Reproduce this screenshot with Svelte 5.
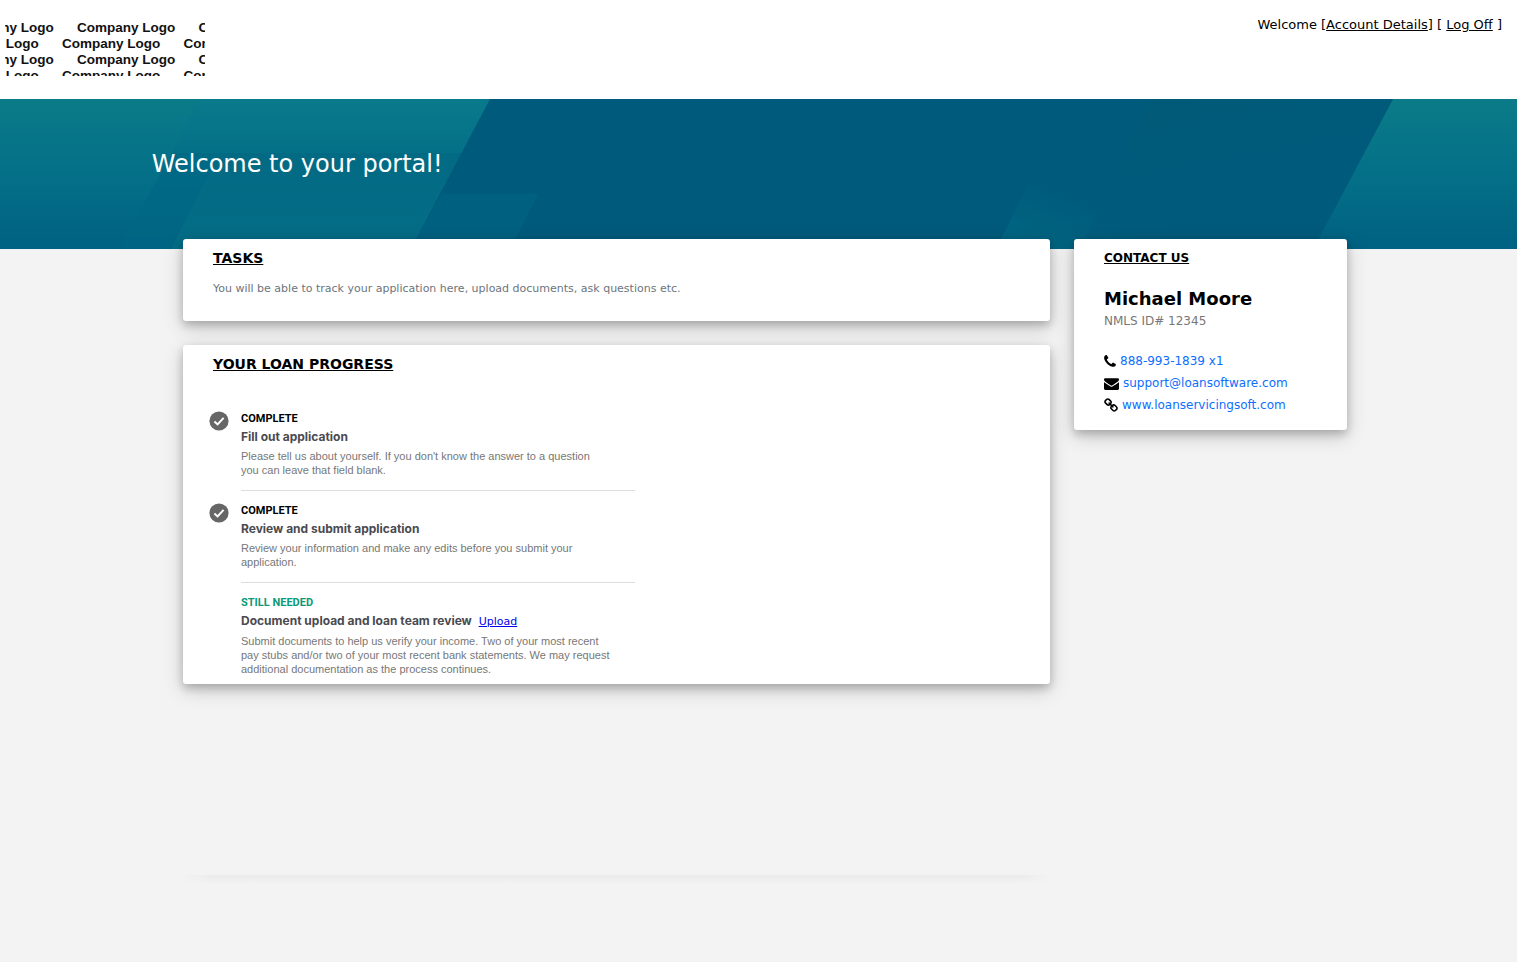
<script lang="ts">
	interface Step {
		status: string;
		done: boolean;
		title: string;
		text: string;
		action?: string;
	}

	const steps: Step[] = [
		{
			status: 'COMPLETE',
			done: true,
			title: 'Fill out application',
			text: "Please tell us about yourself. If you don't know the answer to a question\nyou can leave that field blank."
		},
		{
			status: 'COMPLETE',
			done: true,
			title: 'Review and submit application',
			text: 'Review your information and make any edits before you submit your\napplication.'
		},
		{
			status: 'STILL NEEDED',
			done: false,
			title: 'Document upload and loan team review',
			text: 'Submit documents to help us verify your income. Two of your most recent\npay stubs and/or two of your most recent bank statements. We may request\nadditional documentation as the process continues.',
			action: 'Upload'
		}
	];

	// each row of the logo is shifted against the next
	const logoRows = [
		{ y: 18, start: -99 },
		{ y: 50, start: -129 },
		{ y: 82, start: -99 },
		{ y: 114, start: -129 }
	];
</script>

<header class="topbar">
	<svg class="logo" viewBox="0 0 400 106" role="img" aria-label="Company Logo">
		{#each logoRows as row}
			{#each [0, 1, 2] as n}
				<text x={row.start + n * 243} y={row.y}>Company Logo</text>
			{/each}
		{/each}
	</svg>
	<nav class="account">
		Welcome [<a href="#account">Account Details</a>] [ <a href="#logoff">Log Off</a> ]
	</nav>
</header>

<section class="banner">
	<svg class="banner-art" viewBox="0 0 1517 150" preserveAspectRatio="none" aria-hidden="true">
		<defs>
			<linearGradient id="teal" x1="0" y1="0" x2="0" y2="1">
				<stop offset="0" stop-color="#0b7b88" />
				<stop offset="0.5" stop-color="#047088" />
				<stop offset="1" stop-color="#006182" />
			</linearGradient>
			<linearGradient id="band" x1="0" y1="0" x2="0" y2="1">
				<stop offset="0" stop-color="#097a8b" />
				<stop offset="1" stop-color="#047088" />
			</linearGradient>
			<linearGradient id="bandLow" x1="0" y1="0" x2="0" y2="1">
				<stop offset="0" stop-color="#036a84" />
				<stop offset="1" stop-color="#046d86" />
			</linearGradient>
			<linearGradient id="glow" x1="0" y1="1" x2="0.5" y2="0.5">
				<stop offset="0" stop-color="#006882" />
				<stop offset="1" stop-color="#005a7b" />
			</linearGradient>
			<linearGradient id="shade" x1="0" y1="0" x2="0.4" y2="1">
				<stop offset="0" stop-color="#005a74" />
				<stop offset="0.6" stop-color="#005a7b" />
			</linearGradient>
		</defs>
		<rect width="1517" height="150" fill="url(#teal)" />
		<polygon points="199,0 490,0 463,54 172,54" fill="url(#band)" />
		<polygon points="172,54 220,54 171,150 118,150" fill="#006685" opacity="0.7" />
		<polygon points="220,54 463,54 411,150 171,150" fill="url(#bandLow)" />
		<polygon points="490,0 1393,0 1313,150 411,150" fill="#005a7b" />
		<polygon points="441,95 538,95 511,150 411,150" fill="#006080" />
		<polygon points="1041,60 1220,60 1220,150 996,150" fill="url(#glow)" />
		<polygon points="1151,0 1393,0 1313,150 1080,150" fill="url(#shade)" opacity="0.6" />
	</svg>
	<h1>Welcome to your portal!</h1>
</section>

<main class="content">
	<div class="main-column">
		<section class="card">
			<h2>TASKS</h2>
			<p class="intro">You will be able to track your application here, upload documents, ask questions etc.</p>
		</section>

		<section class="card progress">
			<h2>YOUR LOAN PROGRESS</h2>
			<ol class="steps">
				{#each steps as step}
					<li class="step">
						<div class="marker">
							{#if step.done}
								<svg viewBox="0 0 20 20" aria-hidden="true">
									<circle cx="10" cy="10" r="9.6" fill="#666" />
									<path d="M5.4 10.4 8.6 13.4 14.6 6.8" fill="none" stroke="#fff" stroke-width="2" />
								</svg>
							{/if}
						</div>
						<div class="step-body">
							<div class="status" class:needed={!step.done}>{step.status}</div>
							<h3>
								{step.title}
								{#if step.action}<a href="#upload">{step.action}</a>{/if}
							</h3>
							<p>{step.text}</p>
						</div>
					</li>
				{/each}
			</ol>
		</section>
		<div class="page-shadow"></div>
	</div>

	<aside class="card contact">
		<h2>CONTACT US</h2>
		<div class="name">Michael Moore</div>
		<div class="nmls">NMLS ID# 12345</div>
		<ul>
			<li>
				<svg width="12" height="15" viewBox="0 0 1408 1792" aria-hidden="true"><path d="M1408 1240q0 27-10 70.5t-21 68.5q-21 50-122 106-94 51-186 51-27 0-53-3.5t-57-12.5-47-14.5-55.5-20.5-49.5-18q-98-35-175-83-127-79-264-216t-216-264q-48-77-83-175-3-9-18-49.5t-20.5-55.5-14.5-47-12.5-57-3.5-53q0-92 51-186 56-101 106-122 25-11 68.500-21t70.500-10q14 0 21 3 18 6 53 76 11 19 30 54t35 63.500 31 53.500q3 4 17.500 25t21.500 35.500 7 28.500q0 20-28.500 50t-62 55-62 53-28.500 46q0 9 5 22.500t8.500 20.500 14 24 11.500 19q76 137 174 235t235 174q2 1 19 11.500t24 14 20.500 8.500 22.500 5q18 0 46-28.500t53-62 55-62 50-28.500q14 0 28.500 7t35.500 21.500 25 17.500q25 15 53.500 31t63.500 35 54 30q70 35 76 53 3 7 3 21z" /></svg>
				<a href="tel:888-993-1839">888-993-1839 x1</a>
			</li>
			<li>
				<svg width="15" height="15" viewBox="0 0 1792 1792" aria-hidden="true"><path d="M1792 710v794q0 66-47 113t-113 47h-1472q-66 0-113-47t-47-113v-794q44 49 101 87 362 246 497 345 57 42 92.500 65.500t94.500 48 110 24.500h2q51 0 110-24.500t94.500-48 92.500-65.500q170-123 498-345 57-39 100-87zm0-294q0 79-49 151t-122 123q-376 261-468 325-10 7-42.500 31t-54 38.500-52 32.500-57.500 27-50 9h-2q-23 0-50-9t-57.500-27-52-32.500-54-38.500-42.500-31q-91-64-262-182.500t-205-142.500q-62-42-117-115.500t-55-136.500q0-78 41.500-130t118.500-52h1472q65 0 112.500 47t47.500 113z" /></svg>
				<a href="mailto:support@loansoftware.com">support@loansoftware.com</a>
			</li>
			<li>
				<svg width="14" height="15" viewBox="64 0 1664 1792" aria-hidden="true"><path d="M1520 1216q0-40-28-68l-208-208q-28-28-68-28-42 0-72 32 3 3 19 18.500t21.500 21.500 15 19 13 25.500 3.500 27.500q0 40-28 68t-68 28q-15 0-27.500-3.500t-25.500-13-19-15-21.500-21.500-18.500-19q-33 31-33 73 0 40 28 68l206 207q27 27 68 27 40 0 68-26l147-146q28-28 28-67zm-703-705q0-40-28-68l-206-207q-28-28-68-28-39 0-68 27l-147 146q-28 28-28 67 0 40 28 68l208 208q27 27 68 27 42 0 72-31-3-3-19-18.500t-21.500-21.500-15-19-13-25.500-3.500-27.500q0-40 28-68t68-28q15 0 27.500 3.500t25.500 13 19 15 21.500 21.500 18.500 19q33-31 33-73zm895 705q0 120-85 203l-147 146q-83 83-203 83-121 0-204-85l-206-207q-83-83-83-203 0-123 88-209l-88-88q-86 88-208 88-120 0-204-84l-208-208q-84-84-84-204t85-203l147-146q83-83 203-83 121 0 204 85l206 207q83 83 83 203 0 123-88 209l88 88q86-88 208-88 120 0 204 84l208 208q84 84 84 204z" /></svg>
				<a href="#website">www.loanservicingsoft.com</a>
			</li>
		</ul>
	</aside>
</main>

<style>
	:global(body) {
		background: #f3f3f3;
		color: #000;
		font-family: Verdana, "DejaVu Sans", sans-serif;
		font-size: 12px;
	}

	h1, h2, h3, p, ul, ol {
		margin: 0;
		padding: 0;
	}

	ul, ol {
		list-style: none;
	}

	.topbar {
		display: flex;
		justify-content: space-between;
		align-items: flex-start;
		min-height: 99px;
		padding: 0 15px 0 5px;
		box-sizing: border-box;
		background: #fff;
	}

	.logo {
		width: 200px;
		height: 53px;
		margin-top: 23px;
		overflow: hidden;
		font: bold 27px "Liberation Sans", Arial, sans-serif;
		fill: #111;
	}

	.account {
		padding-top: 15px;
		font-size: 13px;
		line-height: 20px;
	}

	.account a {
		color: inherit;
	}

	.banner {
		position: relative;
		height: 150px;
	}

	.banner-art {
		position: absolute;
		inset: 0;
		width: 100%;
		height: 100%;
	}

	h1 {
		position: relative;
		padding: 49px 10% 0;
		color: #fff;
		font-size: 24px;
		font-weight: normal;
		line-height: 32px;
	}

	.content {
		position: relative;
		display: grid;
		grid-template-columns: minmax(0, 1fr) 273px;
		align-items: start;
		gap: 24px;
		margin-top: -10px;
		padding: 0 170px 0 183px;
	}

	.main-column {
		display: flex;
		flex-direction: column;
		gap: 24px;
	}

	.card {
		padding: 10px 30px;
		border-radius: 3px;
		background: #fff;
		box-shadow:
			0 4px 8px rgba(0, 0, 0, 0.2),
			0 6px 20px rgba(0, 0, 0, 0.19);
	}

	h2 {
		font-size: 14px;
		line-height: 18px;
		text-decoration: underline;
	}

	.intro {
		padding: 13px 0;
		color: #6c757d;
		font-size: 11px;
		line-height: 18px;
	}

	.steps {
		width: 426px;
		max-width: 100%;
		margin: 38px 0 0 -4px;
	}

	.step {
		display: flex;
		gap: 12px;
	}

	.marker {
		width: 20px;
		flex: none;
	}

	.marker svg {
		display: block;
		width: 20px;
		height: 20px;
	}

	.step-body {
		flex: 1;
		padding-bottom: 13px;
		font-family: "Liberation Sans", Arial, sans-serif;
	}

	.step:not(:last-child) .step-body {
		margin-bottom: 12px;
		border-bottom: 1px solid #ddd;
	}

	.step:last-child .step-body {
		padding-bottom: 0;
	}

	.status {
		font-family: Roboto, sans-serif;
		font-size: 11px;
		font-weight: bold;
		line-height: 16px;
	}

	.status.needed {
		color: #0b9a78;
	}

	h3 {
		color: #4a4a4f;
		font-family: Inter, sans-serif;
		font-size: 12px;
		font-weight: 700;
		line-height: 19px;
	}

	h3 a {
		margin-left: 4px;
		color: #00e;
		font-family: Verdana, "DejaVu Sans", sans-serif;
		font-size: 11px;
		font-weight: normal;
	}

	.step p {
		padding-top: 3px;
		color: #777;
		font-size: 11px;
		line-height: 14px;
		white-space: pre-line;
	}

	.progress {
		padding-bottom: 8px;
	}

	/* tail of the page shadow under the main column */
	.page-shadow {
		height: 10px;
		margin-top: 167px;
		background: linear-gradient(#ebebeb, #f3f3f3);
		mask-image: linear-gradient(90deg, transparent, #000 3%, #000 97%, transparent);
	}

	.contact {
		padding-bottom: 14px;
	}

	.contact h2 {
		font-size: 12px;
	}

	.name {
		margin-top: 20px;
		font-size: 18px;
		font-weight: bold;
		line-height: 24px;
	}

	.nmls {
		color: #777;
		line-height: 20px;
	}

	.contact ul {
		margin-top: 19px;
	}

	.contact li {
		display: flex;
		align-items: center;
		gap: 4px;
		line-height: 22px;
	}

	.contact li a {
		color: #0d6efd;
		text-decoration: none;
	}
</style>
